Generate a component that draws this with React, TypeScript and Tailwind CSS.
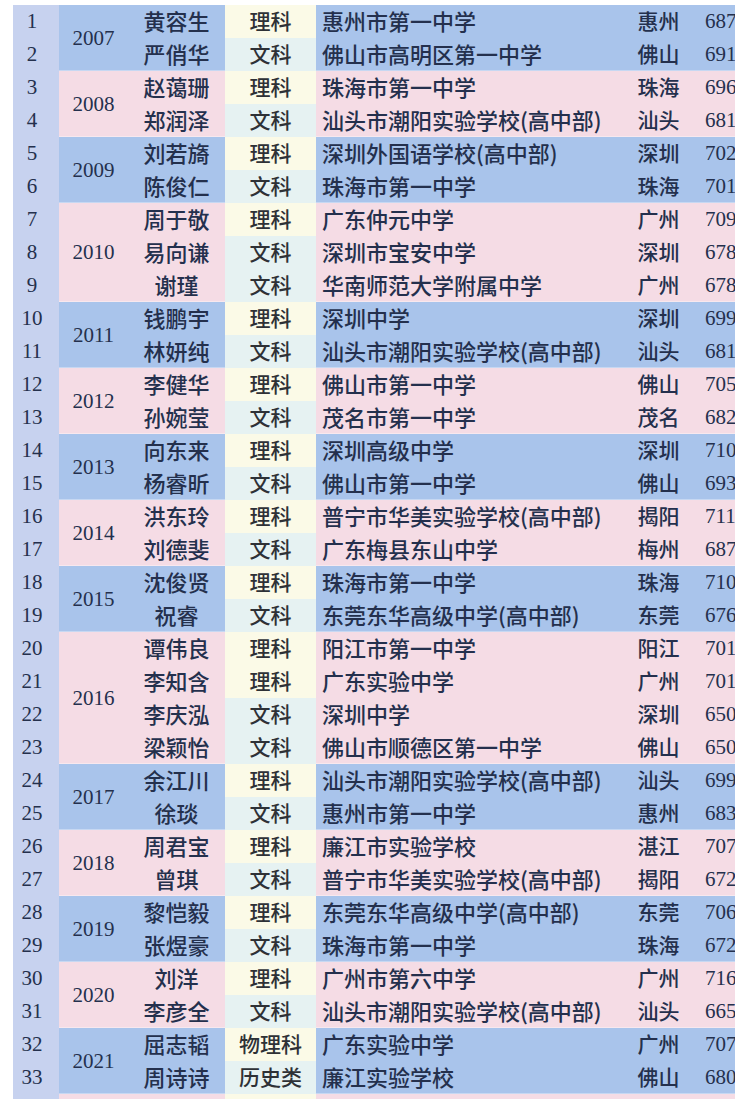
import React from "react";

type Row = [string, string, string, string, string, string];

const groups: { year: string; rows: Row[] }[] = [
  { year: "2007", rows: [
    ["1", "黄容生", "理科", "惠州市第一中学", "惠州", "687"],
    ["2", "严俏华", "文科", "佛山市高明区第一中学", "佛山", "691"],
  ] },
  { year: "2008", rows: [
    ["3", "赵蔼珊", "理科", "珠海市第一中学", "珠海", "696"],
    ["4", "郑润泽", "文科", "汕头市潮阳实验学校(高中部)", "汕头", "681"],
  ] },
  { year: "2009", rows: [
    ["5", "刘若旖", "理科", "深圳外国语学校(高中部)", "深圳", "702"],
    ["6", "陈俊仁", "文科", "珠海市第一中学", "珠海", "701"],
  ] },
  { year: "2010", rows: [
    ["7", "周于敬", "理科", "广东仲元中学", "广州", "709"],
    ["8", "易向谦", "文科", "深圳市宝安中学", "深圳", "678"],
    ["9", "谢瑾", "文科", "华南师范大学附属中学", "广州", "678"],
  ] },
  { year: "2011", rows: [
    ["10", "钱鹏宇", "理科", "深圳中学", "深圳", "699"],
    ["11", "林妍纯", "文科", "汕头市潮阳实验学校(高中部)", "汕头", "681"],
  ] },
  { year: "2012", rows: [
    ["12", "李健华", "理科", "佛山市第一中学", "佛山", "705"],
    ["13", "孙婉莹", "文科", "茂名市第一中学", "茂名", "682"],
  ] },
  { year: "2013", rows: [
    ["14", "向东来", "理科", "深圳高级中学", "深圳", "710"],
    ["15", "杨睿昕", "文科", "佛山市第一中学", "佛山", "693"],
  ] },
  { year: "2014", rows: [
    ["16", "洪东玲", "理科", "普宁市华美实验学校(高中部)", "揭阳", "711"],
    ["17", "刘德斐", "文科", "广东梅县东山中学", "梅州", "687"],
  ] },
  { year: "2015", rows: [
    ["18", "沈俊贤", "理科", "珠海市第一中学", "珠海", "710"],
    ["19", "祝睿", "文科", "东莞东华高级中学(高中部)", "东莞", "676"],
  ] },
  { year: "2016", rows: [
    ["20", "谭伟良", "理科", "阳江市第一中学", "阳江", "701"],
    ["21", "李知含", "理科", "广东实验中学", "广州", "701"],
    ["22", "李庆泓", "文科", "深圳中学", "深圳", "650"],
    ["23", "梁颖怡", "文科", "佛山市顺德区第一中学", "佛山", "650"],
  ] },
  { year: "2017", rows: [
    ["24", "余江川", "理科", "汕头市潮阳实验学校(高中部)", "汕头", "699"],
    ["25", "徐琰", "文科", "惠州市第一中学", "惠州", "683"],
  ] },
  { year: "2018", rows: [
    ["26", "周君宝", "理科", "廉江市实验学校", "湛江", "707"],
    ["27", "曾琪", "文科", "普宁市华美实验学校(高中部)", "揭阳", "672"],
  ] },
  { year: "2019", rows: [
    ["28", "黎恺毅", "理科", "东莞东华高级中学(高中部)", "东莞", "706"],
    ["29", "张煜豪", "文科", "珠海市第一中学", "珠海", "672"],
  ] },
  { year: "2020", rows: [
    ["30", "刘洋", "理科", "广州市第六中学", "广州", "716"],
    ["31", "李彦全", "文科", "汕头市潮阳实验学校(高中部)", "汕头", "665"],
  ] },
  { year: "2021", rows: [
    ["32", "屈志韬", "物理科", "广东实验中学", "广州", "707"],
    ["33", "周诗诗", "历史类", "廉江实验学校", "佛山", "680"],
  ] },
  { year: "", rows: [["", "", "理科", "", "", ""]] },
];

const serif = "font-['Liberation_Serif','Times_New_Roman',serif]";
const cjk = "font-['Noto_Sans_CJK_SC','Noto_Sans',sans-serif] font-medium pb-[3px]";

export default function App() {
  return (
    <div className="w-[735px] h-[1099px] overflow-hidden bg-white pt-[5px] pl-[13px] text-[#24304d]">
      {groups.map((g, gi) => {
        const bg = gi % 2 === 0 ? "bg-[#a9c4eb]" : "bg-[#f5dce5]";
        return (
          <div key={gi} className={`flex ${bg} shadow-[inset_0_-1px_0_rgba(255,255,255,0.35)]`}>
            <div className="w-[46px] shrink-0 bg-[#c7d2ef]">
              {g.rows.map((r, i) => (
                <div key={i} className={`h-[33px] pr-[8px] pb-[1px] flex items-center justify-center text-[21px] leading-none ${serif}`}>
                  {r[0]}
                </div>
              ))}
            </div>
            <div className={`w-[69px] shrink-0 flex items-center justify-center text-[21px] leading-none ${serif}`}>
              {g.year}
            </div>
            <div className="flex flex-col">
              {g.rows.map((r, i) => (
                <div key={i} className="h-[33px] flex items-center leading-none">
                  <div className={`w-[97px] shrink-0 text-center text-[22px] ${cjk}`}>{r[1]}</div>
                  <div
                    className={`w-[91px] h-full shrink-0 flex items-center justify-center text-[21px] text-[#2e3136] ${cjk} ${
                      r[2] === "理科" || r[2] === "物理科" ? "bg-[#fbfae7]" : "bg-[#e6f2f2]"
                    }`}
                  >
                    {r[1] ? r[2] : ""}
                  </div>
                  <div className={`w-[314px] shrink-0 pl-[6px] text-[22px] whitespace-nowrap ${cjk}`}>{r[3]}</div>
                  <div className={`w-[57px] shrink-0 text-center text-[21px] ${cjk}`}>{r[4]}</div>
                  <div className={`pl-[18px] text-[21px] whitespace-nowrap ${serif}`}>{r[5]}</div>
                </div>
              ))}
            </div>
          </div>
        );
      })}
    </div>
  );
}
